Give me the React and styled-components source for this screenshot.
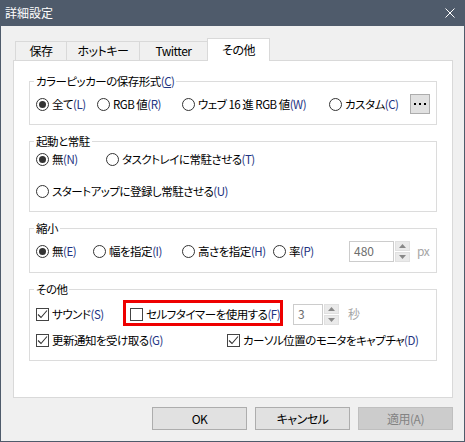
import React from "react";
import styled, { createGlobalStyle } from "styled-components";

const GlobalStyle = createGlobalStyle`
  html, body { margin: 0; padding: 0; background: #fff; }
  body {
    font-family: "Noto Sans CJK JP", "Liberation Sans", sans-serif;
    font-size: 11.5px;
    letter-spacing: -0.5px;
    font-feature-settings: "palt";
    color: #000;
  }
  * { box-sizing: border-box; }
`;

const Window = styled.div`
  width: 465px;
  height: 442px;
  border: 1px solid #4f5b6b;
  border-top: none;
  background: #f0f0f0;
  display: flex;
  flex-direction: column;
`;

const TitleBar = styled.div`
  height: 26px;
  flex-shrink: 0;
  background: #4f5b6b;
  color: #fff;
  font-size: 12px;
  letter-spacing: 0;
  display: flex;
  align-items: center;
  justify-content: space-between;
  padding: 0 9px 0 4px;
  line-height: 16px;
`;

const Content = styled.div`
  padding: 12px 11px 0 12px;
`;

const TabRow = styled.div`
  display: flex;
  align-items: flex-end;
  height: 22px;
  padding-left: 2px;
`;

const Tab = styled.div`
  width: ${(p) => p.$w}px;
  height: ${(p) => (p.$active ? 23 : 19)}px;
  margin-left: ${(p) => (p.$first ? 0 : -1)}px;
  margin-bottom: ${(p) => (p.$active ? -1 : 0)}px;
  position: relative;
  z-index: ${(p) => (p.$active ? 1 : 0)};
  border: 1px solid #d9d9d9;
  border-bottom: none;
  background: ${(p) => (p.$active ? "#fff" : "#f0f0f0")};
  display: flex;
  align-items: center;
  justify-content: center;
  line-height: 16px;
  font-size: 12px;
`;

const Panel = styled.div`
  height: 338px;
  background: #fff;
  border: 1px solid #d9d9d9;
  padding: 12px 15px 0;
`;

const Group = styled.fieldset`
  margin: ${(p) => p.$mt || 0}px 0 0;
  padding: ${(p) => p.$pt || 0}px 6px 10px;
  border: 1px solid #dcdcdc;
  min-width: 0;
`;

const Legend = styled.legend`
  padding: 0 2px;
  margin-left: -2px;
  line-height: 16px;
`;

const Row = styled.div`
  display: flex;
  align-items: center;
  height: ${(p) => p.$h || 20}px;
  margin-top: ${(p) => p.$mt || 0}px;
  line-height: 16px;
  white-space: nowrap;
`;

const Option = styled.label`
  display: flex;
  align-items: center;
  gap: 3px;
  width: ${(p) => (p.$w ? `${p.$w}px` : "auto")};
  flex-shrink: 0;
`;

const Radio = styled.span`
  width: 13px;
  height: 13px;
  border: 1px solid #333;
  border-radius: 50%;
  display: flex;
  align-items: center;
  justify-content: center;
  flex-shrink: 0;
  &::after {
    content: "";
    width: 7px;
    height: 7px;
    border-radius: 50%;
    background: ${(p) => (p.$on ? "#333" : "transparent")};
  }
`;

const Box = styled.span`
  width: 13px;
  height: 13px;
  border: 1px solid #444;
  display: flex;
  align-items: center;
  justify-content: center;
  flex-shrink: 0;
  background: #fff;
`;

const Key = styled.span`
  color: #1e3482;
`;

const Highlight = styled.div`
  position: relative;
  width: ${(p) => p.$w}px;
  flex-shrink: 0;
  display: flex;
  align-items: center;
  &::after {
    content: "";
    position: absolute;
    left: -7px;
    top: -6px;
    right: 10px;
    bottom: -4px;
    border: 3px solid #ee0000;
    pointer-events: none;
  }
`;

const DotsButton = styled.div`
  width: 21px;
  height: 20px;
  background: #e1e1e1;
  border: 1px solid #adadad;
  display: flex;
  align-items: center;
  justify-content: center;
  gap: 3px;
  span {
    width: 2px;
    height: 2px;
    background: #000;
  }
`;

const Spin = styled.div`
  display: flex;
  align-items: center;
  height: 21px;
`;

const SpinInput = styled.div`
  width: ${(p) => p.$w}px;
  height: 21px;
  border: 1px solid #cccccc;
  color: #6d6d6d;
  padding-left: 4px;
  display: flex;
  align-items: center;
  line-height: 16px;
  font-size: 12px;
  letter-spacing: 0;
`;

const SpinArrows = styled.div`
  width: 15px;
  height: 21px;
  margin-left: 1px;
  display: flex;
  flex-direction: column;
  gap: 1px;
`;

const SpinArrow = styled.div`
  flex: 1;
  background: #eaeaea;
  border: 1px solid #e0e0e0;
  display: flex;
  align-items: center;
  justify-content: center;
`;

const Unit = styled.span`
  color: #a6a6a6;
  font-size: 12px;
  margin-left: ${(p) => p.$ml}px;
`;

const Footer = styled.div`
  display: flex;
  justify-content: flex-end;
  gap: 8px;
  margin-top: 9px;
`;

const Button = styled.div`
  width: 95px;
  height: 23px;
  background: ${(p) => (p.$disabled ? "#cccccc" : "#e1e1e1")};
  border: 1px solid ${(p) => (p.$disabled ? "#bfbfbf" : "#adadad")};
  color: ${(p) => (p.$disabled ? "#838383" : "#000")};
  display: flex;
  align-items: center;
  justify-content: center;
  line-height: 16px;
  font-size: 12px;
`;

const Check = () => (
  <svg width="11" height="11" viewBox="0 0 11 11">
    <path d="M1 5.5 L4 8.5 L10 1.5" fill="none" stroke="#333" strokeWidth="1.1" />
  </svg>
);

const Arrow = ({ up }) => (
  <svg width="7" height="4" viewBox="0 0 7 4">
    <path d={up ? "M0 4 L3.5 0 L7 4 Z" : "M0 0 L3.5 4 L7 0 Z"} fill="#888" />
  </svg>
);

const RadioOpt = ({ w, on, text, k }) => (
  <Option $w={w}>
    <Radio $on={on} />
    <span>
      {text}
      <Key>({k})</Key>
    </span>
  </Option>
);

const CheckOpt = ({ w, on, text, k }) => (
  <Option $w={w}>
    <Box>{on && <Check />}</Box>
    <span>
      {text}
      <Key>({k})</Key>
    </span>
  </Option>
);

const SpinBox = ({ w, value }) => (
  <Spin>
    <SpinInput $w={w}>{value}</SpinInput>
    <SpinArrows>
      <SpinArrow>
        <Arrow up />
      </SpinArrow>
      <SpinArrow>
        <Arrow />
      </SpinArrow>
    </SpinArrows>
  </Spin>
);

export default function App() {
  return (
    <>
      <GlobalStyle />
      <Window>
        <TitleBar>
          <span>詳細設定</span>
          <svg width="10" height="10" viewBox="0 0 10 10">
            <path d="M0.5 0.5 L9.5 9.5 M9.5 0.5 L0.5 9.5" stroke="#fff" strokeWidth="1" />
          </svg>
        </TitleBar>
        <Content>
          <TabRow>
            <Tab $w={52} $first>保存</Tab>
            <Tab $w={74}>ホットキー</Tab>
            <Tab $w={69}>Twitter</Tab>
            <Tab $w={63} $active>その他</Tab>
          </TabRow>
          <Panel>
            <Group $pt={5}>
              <Legend>
                カラーピッカーの保存形式<Key>(<u>C</u>)</Key>
              </Legend>
              <Row $h={20}>
                <RadioOpt w={61} on text="全て" k="L" />
                <RadioOpt w={85} text="RGB 値" k="R" />
                <RadioOpt w={147} text="ウェブ 16 進 RGB 値" k="W" />
                <RadioOpt w={81} text="カスタム" k="C" />
                <DotsButton>
                  <span />
                  <span />
                  <span />
                </DotsButton>
              </Row>
            </Group>

            <Group $mt={8}>
              <Legend>起動と常駐</Legend>
              <Row $h={20}>
                <RadioOpt w={70} on text="無" k="N" />
                <RadioOpt text="タスクトレイに常駐させる" k="T" />
              </Row>
              <Row $h={20} $mt={12}>
                <RadioOpt text="スタートアップに登録し常駐させる" k="U" />
              </Row>
            </Group>

            <Group $mt={8} $pt={4}>
              <Legend>縮小</Legend>
              <Row $h={22}>
                <RadioOpt w={57} on text="無" k="E" />
                <RadioOpt w={89} text="幅を指定" k="I" />
                <RadioOpt w={91} text="高さを指定" k="H" />
                <RadioOpt w={76} text="率" k="P" />
                <SpinBox w={45} value="480" />
                <Unit $ml={7}>px</Unit>
              </Row>
            </Group>

            <Group $mt={8} $pt={6}>
              <Legend>その他</Legend>
              <Row $h={22}>
                <CheckOpt w={94} on text="サウンド" k="S" />
                <Highlight $w={163}>
                  <CheckOpt text="セルフタイマーを使用する" k="F" />
                </Highlight>
                <SpinBox w={30} value="3" />
                <Unit $ml={9}>秒</Unit>
              </Row>
              <Row $h={20} $mt={5}>
                <CheckOpt w={191} on text="更新通知を受け取る" k="G" />
                <CheckOpt on text="カーソル位置のモニタをキャプチャ" k="D" />
              </Row>
            </Group>
          </Panel>
          <Footer>
            <Button>OK</Button>
            <Button>キャンセル</Button>
            <Button $disabled>適用(A)</Button>
          </Footer>
        </Content>
      </Window>
    </>
  );
}
